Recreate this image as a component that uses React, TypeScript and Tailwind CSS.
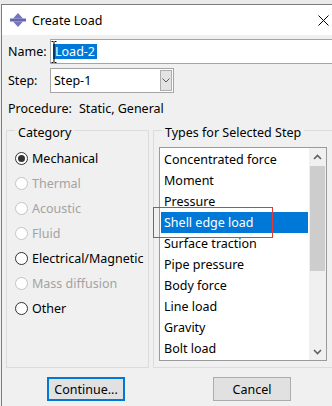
import React from "react";

const categories: { label: string; enabled: boolean; checked?: boolean }[] = [
  { label: "Mechanical", enabled: true, checked: true },
  { label: "Thermal", enabled: false },
  { label: "Acoustic", enabled: false },
  { label: "Fluid", enabled: false },
  { label: "Electrical/Magnetic", enabled: true },
  { label: "Mass diffusion", enabled: false },
  { label: "Other", enabled: true },
];

const types = [
  "Concentrated force",
  "Moment",
  "Pressure",
  "Shell edge load",
  "Surface traction",
  "Pipe pressure",
  "Body force",
  "Line load",
  "Gravity",
  "Bolt load",
];

function Radio({ enabled, checked }: { enabled: boolean; checked?: boolean }) {
  return (
    <div
      className={
        "w-[13px] h-[13px] rounded-full border flex items-center justify-center bg-white shrink-0 " +
        (enabled ? "border-[#333333]" : "border-[#c4c4c4]")
      }
    >
      {checked && <div className="w-[7px] h-[7px] rounded-full bg-[#333333]" />}
    </div>
  );
}

export default function App() {
  return (
    <div className="relative w-[332px] h-[406px] overflow-hidden bg-[#f0f0f0] font-['Noto_Sans',sans-serif] text-[12.5px] text-black">
      <div className="h-[4px] bg-[#eaeaea]" />
      <div className="ml-[1px] w-[340px] h-[402px] border-l border-t border-[#7c7c7c] bg-[#f0f0f0] flex flex-col">
        {/* title bar */}
        <div className="h-[30px] w-[330px] bg-white flex items-center shrink-0">
          <svg className="ml-[8px]" width="16" height="16" viewBox="0 0 16 16">
            <polygon points="8,1 13,6.5 3,6.5" fill="#7676c0" />
            <rect x="0" y="6.5" width="16" height="3" fill="#6565b0" />
            <polygon points="3,9.5 13,9.5 8,15" fill="#7676c0" />
          </svg>
          <span className="ml-[6px] leading-[17px]">Create Load</span>
          <svg className="ml-auto mr-[3px]" width="11" height="11" viewBox="0 0 11 11">
            <path d="M0.5 0.5 L10.5 10.5 M10.5 0.5 L0.5 10.5" stroke="#000" strokeWidth="1" fill="none" />
          </svg>
        </div>

        {/* name row */}
        <div className="mt-[4px] h-[25px] flex items-center shrink-0">
          <span className="pl-[6px] w-[48px] leading-[17px]">Name:</span>
          <div className="w-[290px] h-[25px] border border-[#a5a5a5] bg-white flex items-center shrink-0">
            <span className="ml-[2px] px-[2px] bg-[#0078d7] text-white leading-[15px]">Load-2</span>
          </div>
        </div>

        {/* step row */}
        <div className="mt-[4px] h-[25px] flex items-center shrink-0">
          <span className="pl-[6px] w-[48px] leading-[17px]">Step:</span>
          <div className="w-[124px] h-[25px] border border-[#a5a5a5] bg-white flex items-center justify-between">
            <span className="pl-[3px] leading-[17px]">Step-1</span>
            <div className="w-[12px] h-[21px] mr-[1px] border border-[#adadad] bg-[#e3e3e3] flex items-center justify-center">
              <svg width="8" height="5" viewBox="0 0 8 5">
                <path d="M0.5 0.5 L4 4 L7.5 0.5" stroke="#5a5a5a" strokeWidth="1" fill="none" />
              </svg>
            </div>
          </div>
        </div>

        {/* procedure */}
        <div className="mt-[4px] h-[22px] flex items-center shrink-0">
          <span className="pl-[6px] w-[77px] leading-[17px]">Procedure:</span>
          <span className="leading-[17px]">Static, General</span>
        </div>

        {/* group boxes */}
        <div className="mt-[5px] flex shrink-0">
          {/* Category */}
          <div className="relative ml-[4px] w-[143px] pt-[6px]">
            <div className="h-[238px] border border-[#dcdcdc] pt-[15px] pl-[8px] flex flex-col">
              {categories.map((c) => (
                <div key={c.label} className="h-[25px] flex items-center">
                  <Radio enabled={c.enabled} checked={c.checked} />
                  <span
                    className={
                      "ml-[4px] leading-[17px] whitespace-nowrap " +
                      (c.enabled ? "text-black" : "text-[#a3a3a3]")
                    }
                  >
                    {c.label}
                  </span>
                </div>
              ))}
            </div>
            <span className="absolute top-0 left-[9px] px-[3px] bg-[#f0f0f0] leading-[17px]">Category</span>
          </div>

          {/* Types */}
          <div className="relative ml-[4px] w-[182px] pt-[6px]">
            <div className="h-[238px] border border-[#dcdcdc] pt-[16px] pl-[5px]">
              <div className="w-[168px] h-[214px] border border-[#9a9a9a] bg-white flex">
                <div className="flex-1 pt-[1px] px-[1px] flex flex-col">
                  {types.map((t) => (
                    <div
                      key={t}
                      className={
                        "h-[21px] pl-[3px] flex items-center whitespace-nowrap " +
                        (t === "Shell edge load" ? "bg-[#0078d7] text-white" : "")
                      }
                    >
                      <span className="leading-[17px]">{t}</span>
                    </div>
                  ))}
                </div>
                <div className="w-[17px] bg-[#f0f0f0] flex flex-col">
                  <div className="h-[17px] flex items-center justify-center">
                    <svg width="9" height="6" viewBox="0 0 9 6">
                      <path d="M1 5 L4.5 1.5 L8 5" stroke="#606060" strokeWidth="1.6" fill="none" />
                    </svg>
                  </div>
                  <div className="mt-[1px] mx-[1px] h-[105px] bg-[#cdcdcd]" />
                  <div className="flex-1" />
                  <div className="h-[17px] flex items-center justify-center">
                    <svg width="9" height="6" viewBox="0 0 9 6">
                      <path d="M1 1 L4.5 4.5 L8 1" stroke="#606060" strokeWidth="1.6" fill="none" />
                    </svg>
                  </div>
                </div>
              </div>
            </div>
            <span className="absolute top-0 left-[9px] px-[3px] bg-[#f0f0f0] leading-[17px] whitespace-nowrap">
              Types for Selected Step
            </span>
          </div>
        </div>

        {/* buttons */}
        <div className="mt-[9px] flex shrink-0">
          <button className="ml-[45px] w-[78px] h-[24px] border-2 border-[#0078d7] bg-[#e1e1e1] flex items-center justify-center leading-[17px]">
            Continue...
          </button>
          <button className="ml-[88px] w-[78px] h-[24px] border border-[#adadad] bg-[#e1e1e1] flex items-center justify-center leading-[17px]">
            Cancel
          </button>
        </div>
      </div>

      {/* text cursor (I-beam) over the name field */}
      <svg className="absolute left-[51px] top-[41px]" width="6" height="22" viewBox="0 0 6 22">
        <path d="M0.5 0.5 H2.5 M3.5 0.5 H5.5 M3 1 V21 M0.5 21.5 H2.5 M3.5 21.5 H5.5" stroke="#000" strokeWidth="1" fill="none" />
      </svg>

      {/* red annotation box */}
      <div className="absolute left-[153px] top-[207px] w-[120px] h-[31px] border border-[#e53935]" />
    </div>
  );
}
